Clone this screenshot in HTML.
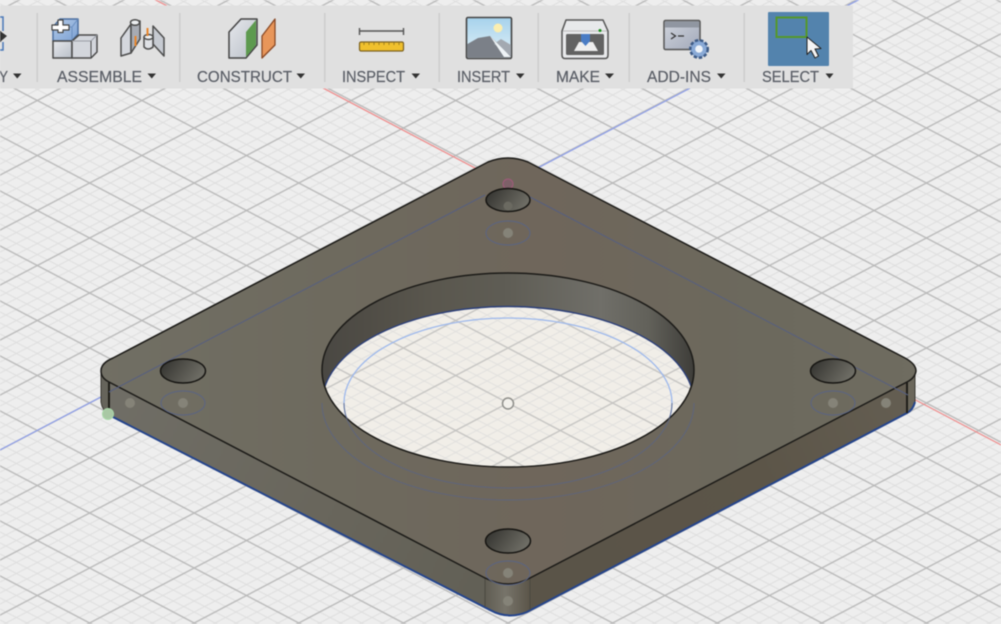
<!DOCTYPE html>
<html><head><meta charset="utf-8">
<style>
html,body{margin:0;padding:0;width:1001px;height:624px;overflow:hidden;background:#eee}
svg{display:block;filter:blur(.6px)}
text{font-family:"Liberation Sans",sans-serif;font-size:15.500px;fill:#5a5e66;stroke:#5a5e66;stroke-width:.2px}
</style></head>
<body>
<svg width="1001" height="624" viewBox="0 0 1001 624" xmlns="http://www.w3.org/2000/svg">
<defs>
<pattern id="grid" patternUnits="userSpaceOnUse" width="1" height="1" patternTransform="matrix(52.3 27.5 -52.3 27.5 508 403)">
<g fill="#dedede">
<rect x=".19" y="0" width=".02" height="1"/><rect x=".39" y="0" width=".02" height="1"/><rect x=".59" y="0" width=".02" height="1"/><rect x=".79" y="0" width=".02" height="1"/>
<rect y=".19" x="0" height=".02" width="1"/><rect y=".39" x="0" height=".02" width="1"/><rect y=".59" x="0" height=".02" width="1"/><rect y=".79" x="0" height=".02" width="1"/>
</g>
<g fill="#b9b9b9">
<rect x="0" y="0" width=".014" height="1"/><rect x=".986" y="0" width=".014" height="1"/>
<rect x="0" y="0" width="1" height=".014"/><rect x="0" y=".986" width="1" height=".014"/>
</g>
</pattern>
<linearGradient id="face" gradientUnits="userSpaceOnUse" x1="100" y1="370" x2="916" y2="370">
<stop offset="0" stop-color="#716f64"/><stop offset=".3" stop-color="#6e6a5e"/><stop offset=".55" stop-color="#6f665b"/><stop offset=".8" stop-color="#6c695d"/><stop offset="1" stop-color="#6f6c60"/>
</linearGradient>
<linearGradient id="sideL" gradientUnits="userSpaceOnUse" x1="101" y1="400" x2="508" y2="600">
<stop offset="0" stop-color="#706e66"/><stop offset=".55" stop-color="#69665c"/><stop offset="1" stop-color="#615f55"/>
</linearGradient>
<linearGradient id="sideR" gradientUnits="userSpaceOnUse" x1="530" y1="590" x2="910" y2="400">
<stop offset="0" stop-color="#5a5448"/><stop offset=".6" stop-color="#5c5548"/><stop offset="1" stop-color="#645e52"/>
</linearGradient>
<linearGradient id="cornerB" x1="0" x2="1" y1="0" y2="0">
<stop offset="0" stop-color="#5f5c52"/><stop offset=".45" stop-color="#77746a"/><stop offset="1" stop-color="#5b5549"/>
</linearGradient>
<linearGradient id="wall" gradientUnits="userSpaceOnUse" x1="322" y1="0" x2="693" y2="0">
<stop offset="0" stop-color="#4a4843"/><stop offset=".12" stop-color="#504d46"/><stop offset=".3" stop-color="#5a574e"/><stop offset=".5" stop-color="#5f5d55"/><stop offset=".75" stop-color="#706f69"/><stop offset=".88" stop-color="#62615a"/><stop offset="1" stop-color="#3f3e3a"/>
</linearGradient>
<linearGradient id="sh" x1="0" x2="1" y1="0" y2=".4">
<stop offset="0" stop-color="#2f2f2c"/><stop offset=".5" stop-color="#4f4e48"/><stop offset="1" stop-color="#6d6c64"/>
</linearGradient>
<linearGradient id="grey" x1="0" x2="1" y1="0" y2="1"><stop offset="0" stop-color="#e6e8ec"/><stop offset="1" stop-color="#b9bfc8"/></linearGradient>
<linearGradient id="blu" x1="0" x2="1" y1="0" y2="1"><stop offset="0" stop-color="#b4cbe8"/><stop offset="1" stop-color="#7ba0d3"/></linearGradient>
<linearGradient id="sky" x1="0" x2="0" y1="0" y2="1"><stop offset="0" stop-color="#a6d2ec"/><stop offset="1" stop-color="#e4f2f8"/></linearGradient>
<linearGradient id="win" x1="0" x2="1" y1="0" y2="1"><stop offset="0" stop-color="#d0d4dc"/><stop offset="1" stop-color="#a2a9ba"/></linearGradient>
<clipPath id="holeClip"><ellipse cx="508" cy="370" rx="186" ry="97"/></clipPath>
</defs>

<!-- background -->
<rect width="1001" height="624" fill="#eeeeee"/>
<rect width="1001" height="624" fill="url(#grid)"/>
<!-- axes -->
<path d="M152 -2L1003 446" stroke="#ef8f8f" stroke-width="1.300" fill="none"/>
<path d="M862 -2L-2 451" stroke="#8f9fe8" stroke-width="1.300" fill="none"/>

<!-- plate sides -->
<path d="M101 367V402Q102 410 109 415L490 610Q508 620 527 612L907 413Q915 409 915 400V368Z" fill="url(#sideL)"/>
<path d="M508 583L907 382L915 370V400Q915 409 907 413L527 612Q518 616 508 616Z" fill="url(#sideR)"/>
<path d="M101 370Q101 378 109 382L109 415Q102 410 101 402Z" fill="#66645b"/>
<path d="M907 382Q915 378 915 370V400Q915 409 907 413Z" fill="#6b675b"/>
<path d="M485 578Q508 590 530 578V611Q508 620 485 607Z" fill="url(#cornerB)"/>
<path d="M109 415L490 610Q508 620 527 612L907 413Q913 410 915 402" fill="none" stroke="#24448c" stroke-width="2"/>
<path d="M109 382V415M907 382V413" stroke="#1f1e19" stroke-width="2" fill="none"/>
<path d="M485 578V607M530 578V610" stroke="#4b4940" stroke-width="1" fill="none"/>
<path d="M101 368V402Q102 410 109 415M915 370V402" stroke="#3c3a34" stroke-width="1" fill="none"/>

<!-- top face -->
<path id="f" d="M488 162Q498 158 508 158Q518 158 528 162L905 358Q916 364 916 371Q915 378 907 382L530 578Q519 584 508 584Q497 584 485 578L109 382Q101 378 101 371Q101 363 113 358Z" fill="url(#face)" stroke="#1c1b18" stroke-width="1.500"/>

<!-- centre hole -->
<ellipse cx="508" cy="370" rx="186" ry="97" fill="url(#wall)"/>
<g clip-path="url(#holeClip)">
<ellipse cx="508" cy="403.500" rx="186" ry="97" fill="#f2f0eb"/>
<ellipse cx="508" cy="403.500" rx="186" ry="97" fill="url(#grid)" opacity=".95"/>
<ellipse cx="508" cy="403.500" rx="186" ry="97" fill="#efe9dc" opacity=".18"/>
<ellipse cx="508" cy="403.500" rx="186" ry="97" fill="none" stroke="#2c3f78" stroke-width="1.400"/>
<ellipse cx="508" cy="403" rx="164" ry="85" fill="none" stroke="#9db8ec" stroke-width="1.300"/>
</g>
<ellipse cx="508" cy="370" rx="186" ry="97" fill="none" stroke="#1c1b18" stroke-width="1.500"/>
<path d="M344 403A164 85 0 0 0 672 403" fill="none" stroke="#5a6484" stroke-width="1" opacity=".8"/>
<path d="M322 403A186 97 0 0 0 694 403" fill="none" stroke="#5a6484" stroke-width="1" opacity=".8"/>
<circle cx="508" cy="403.500" r="5.500" fill="#f2f0eb" stroke="#8f8f8b" stroke-width="1.500"/>

<!-- sketch lines on plate -->
<path d="M485 195L109 392M530 197L908 395" stroke="#565f80" stroke-width="1" fill="none"/>

<!-- ghost circles -->
<g fill="none" stroke="#5a6484" stroke-width="1">
<ellipse cx="508" cy="233" rx="22" ry="12"/>
<ellipse cx="183" cy="403" rx="22" ry="12"/>
<ellipse cx="833" cy="403" rx="22" ry="12"/>
<ellipse cx="508" cy="573" rx="22" ry="12"/>
</g>
<g fill="#858378">
<circle cx="508" cy="233" r="5"/><circle cx="183" cy="403" r="5"/><circle cx="833" cy="403" r="5"/><circle cx="508" cy="573" r="5"/>
<circle cx="130" cy="403" r="5"/><circle cx="886" cy="403" r="5"/><circle cx="508" cy="601" r="5"/>
</g>
<circle cx="508" cy="184" r="5" fill="#7d6068" stroke="#a05a7a" stroke-width="1"/>
<circle cx="108" cy="414" r="5.500" fill="#a9c8a4" stroke="#a8d8a8" stroke-width="1"/>

<!-- small holes -->
<g stroke="#161512" stroke-width="1.500" fill="url(#sh)">
<ellipse cx="508" cy="200" rx="22" ry="11.500"/>
<ellipse cx="183" cy="371" rx="22.500" ry="12"/>
<ellipse cx="833" cy="371" rx="22.500" ry="12"/>
<ellipse cx="508" cy="541" rx="22.500" ry="12"/>
</g>
<circle cx="508" cy="206" r="4.500" fill="#6b6a61"/>

<!-- toolbar -->
<rect x="0" y="5.500" width="853" height="83" fill="#e0e0e0"/>
<g fill="#cdcdcd">
<rect x="36.500" y="13" width="1.500" height="69"/><rect x="179" y="13" width="1.500" height="69"/><rect x="324" y="13" width="1.500" height="69"/><rect x="438.500" y="13" width="1.500" height="69"/><rect x="537.500" y="13" width="1.500" height="69"/><rect x="628.500" y="13" width="1.500" height="69"/><rect x="743.500" y="13" width="1.500" height="69"/>
</g>

<!-- left partial icon -->
<path d="M-2 17H3V31M3 42V50H-2" fill="none" stroke="#4a78b8" stroke-width="1.500"/>
<path d="M0 31L7 36L0 42Z" fill="#333"/>
<rect x="-4" y="31" width="5" height="11" fill="#333"/>

<!-- assemble icon 1 -->
<g stroke="#4a4a4a" stroke-width="1.500" stroke-linejoin="round">
<path d="M53 27L60 19H78V34L72 41H53Z" fill="url(#blu)" stroke="#4c6f9f"/>
<path d="M72 41V27H53M72 27L78 19" fill="none" stroke="#6a8fc0" stroke-width="1"/>
<rect x="53" y="41" width="19" height="17" fill="url(#grey)"/>
<path d="M72 41L79 35H97V52L91 58H72Z" fill="#d3d6dc"/>
<path d="M72 41H91M91 41L97 35" fill="none" stroke="#9a9ea6" stroke-width="1"/>
<path d="M91 41V58H72" fill="none" stroke="#4a4a4a" stroke-width="1"/>
<path d="M58 20H63V25H69V30H63V32.500H58V30H52V25H58Z" fill="#fff" stroke="#444" stroke-width="1.200"/>
</g>

<!-- assemble icon 2 -->
<g stroke="#4d4d4d" stroke-width="1.500" stroke-linejoin="round">
<path d="M121 38L131 24V53L121 56Z" fill="#d4d7dd"/>
<path d="M131 24L134 21H140V39L131 53Z" fill="#a7abb3"/>
<ellipse cx="135" cy="22.500" rx="4.500" ry="2.800" fill="#eceef0"/>
<path d="M153 26L164 38V56L153 44Z" fill="#c6cad1"/>
<path d="M144 37H153V47Q148 51 144 47Z" fill="#dfe1e5"/>
<ellipse cx="148.500" cy="37" rx="4.500" ry="2.500" fill="#eef0f2"/>
</g>
<path d="M135.500 36V46M147.500 28V36" stroke="#e8862c" stroke-width="2"/>

<!-- construct -->
<path d="M229 32L241 19H257V45L246 58H229Z" fill="url(#grey)" stroke="#444" stroke-width="1.500" stroke-linejoin="round"/>
<path d="M246 32L256 20V45L246 57Z" fill="#5d9a4f"/>
<path d="M262 36L275 19V45L262 58Z" fill="#e8965a" stroke="#8b4a26" stroke-width="1.300" stroke-linejoin="round"/>

<!-- inspect -->
<path d="M359 31H404M359.500 28V35M403.500 28V35" stroke="#555" stroke-width="1.400" fill="none"/>
<rect x="359.500" y="42" width="44" height="9" rx="1.500" fill="#f0c02c" stroke="#7c6220" stroke-width="1.200"/>
<path d="M364 42v3M369 42v3M374 42v3M379 42v3M384 42v3M389 42v3M394 42v3M399 42v3" stroke="#8c7020" stroke-width=".8"/>

<!-- insert -->
<rect x="466.500" y="17.500" width="45" height="41" rx="1.500" fill="url(#sky)" stroke="#444" stroke-width="1.600"/>
<circle cx="498" cy="28" r="4.500" fill="#fbeeb0"/>
<path d="M467.500 44L478 38L490 36L511 56V57.500H467.500Z" fill="#7b8088"/>
<path d="M494 44L501 39L511 45V56Z" fill="#a3a9b1"/>
<path d="M490 36L511 57H504Z" fill="#eef3f6"/>

<!-- make -->
<path d="M562 31L566 20H603L608 31V55Q608 58.500 605 58.500H565Q562 58.500 562 55Z" fill="#e8e9eb" stroke="#555" stroke-width="1.500" stroke-linejoin="round"/>
<path d="M563 31H607" stroke="#bbb" stroke-width="1"/>
<rect x="566" y="34" width="38" height="21" rx="1.500" fill="#626262"/>
<path d="M574 51L579 42H593L598 51Z" fill="#eeeeee"/>
<path d="M581 34H590V41L585.500 46L581 41Z" fill="#4a7cc4"/>
<circle cx="600" cy="30.500" r="1.500" fill="#1b8f1b"/>

<!-- add-ins -->
<rect x="664" y="20.500" width="36" height="29" rx="1.500" fill="url(#win)" stroke="#555" stroke-width="1.500"/>
<rect x="665" y="21.500" width="34" height="6" fill="#9096a1"/>
<path d="M671 33L675.500 36L671 39M678 36H684" fill="none" stroke="#333" stroke-width="1.200"/>
<circle cx="699" cy="49" r="8.500" fill="#7ea0cf" stroke="#3d5a85" stroke-width="3" stroke-dasharray="3.300 1.800"/>
<circle cx="699" cy="49" r="7.500" fill="#8aaad6"/>
<circle cx="699" cy="49" r="3.800" fill="#eef3f9"/>

<!-- select -->
<rect x="768" y="12" width="61" height="54" rx="1" fill="#5383ad"/>
<rect x="776.500" y="17.500" width="30" height="19.500" fill="none" stroke="#55982a" stroke-width="2"/>
<path d="M807 37V54.500L811 50.500L815 58L818.500 56L815 49L821 48.500Z" fill="#f4f4f4" stroke="#222" stroke-width="1" stroke-linejoin="round"/>

<!-- labels -->
<text x="-1" y="82" textLength="9" lengthAdjust="spacingAndGlyphs">Y</text>
<text x="57" y="82" textLength="85" lengthAdjust="spacingAndGlyphs">ASSEMBLE</text>
<text x="197" y="82" textLength="95" lengthAdjust="spacingAndGlyphs">CONSTRUCT</text>
<text x="342" y="82" textLength="63" lengthAdjust="spacingAndGlyphs">INSPECT</text>
<text x="457" y="82" textLength="53" lengthAdjust="spacingAndGlyphs">INSERT</text>
<text x="556" y="82" textLength="44" lengthAdjust="spacingAndGlyphs">MAKE</text>
<text x="647" y="82" textLength="64" lengthAdjust="spacingAndGlyphs">ADD-INS</text>
<text x="762" y="82" textLength="57" lengthAdjust="spacingAndGlyphs">SELECT</text>
<g fill="#333">
<path d="M13 73.500H21.500L17.250 78.500Z"/><path d="M147.500 73.500H156L151.750 78.500Z"/><path d="M296.500 73.500H305L300.750 78.500Z"/><path d="M411.500 73.500H420L415.750 78.500Z"/><path d="M516 73.500H524.500L520.250 78.500Z"/><path d="M605 73.500H614L609.500 78.500Z"/><path d="M717 73.500H725.500L721.250 78.500Z"/><path d="M825.500 73.500H833.500L829.500 78.500Z"/>
</g>
</svg>
</body></html>
